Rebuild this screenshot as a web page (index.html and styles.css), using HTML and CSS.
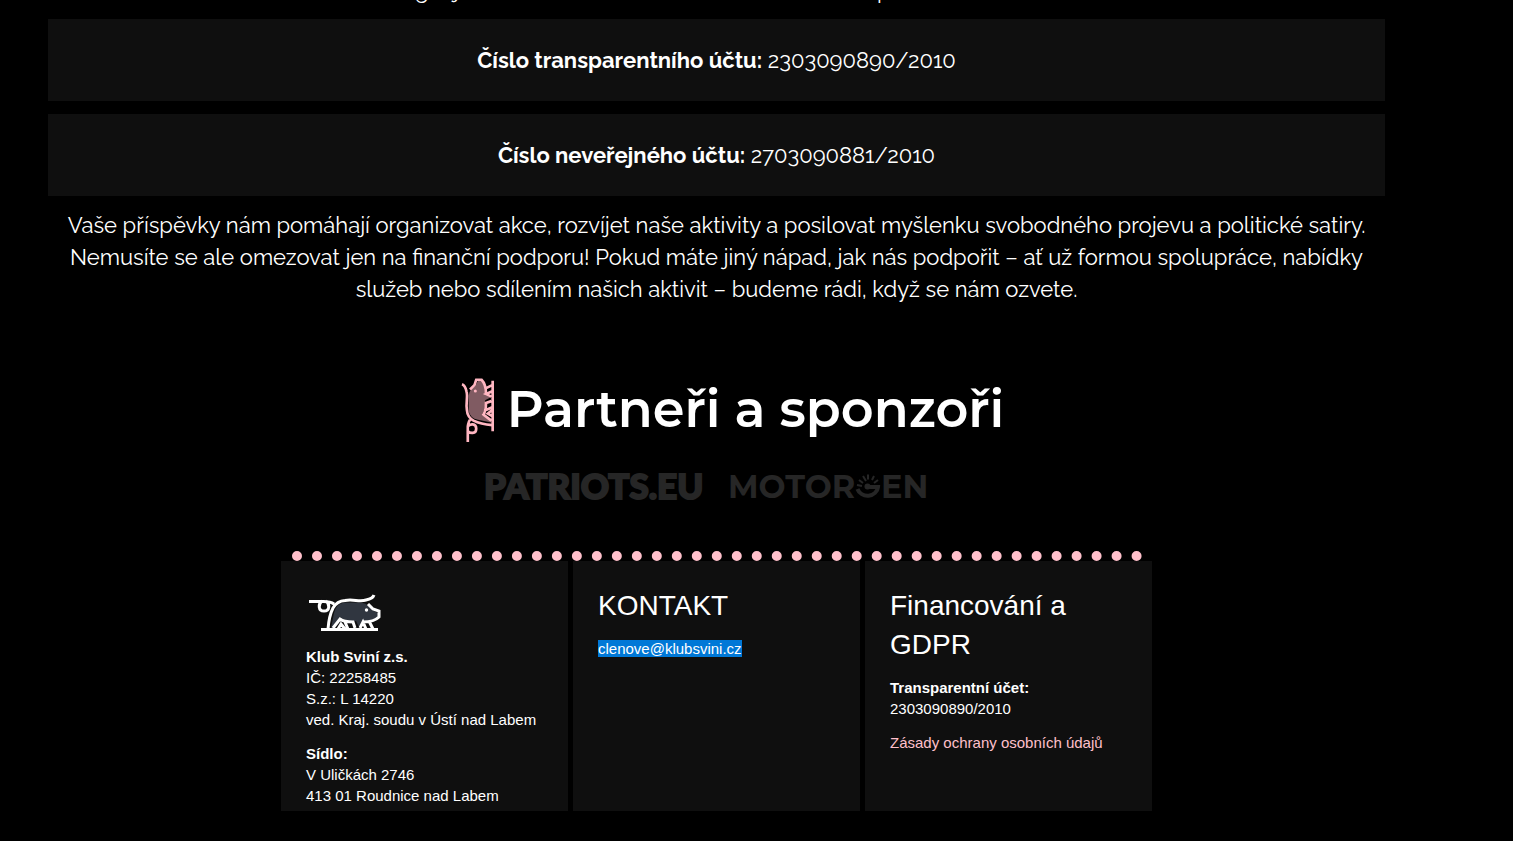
FILE: index.html
```
<!DOCTYPE html>
<html lang="cs">
  <head>
    <meta charset="utf-8">
    <meta name="viewport" content="width=device-width, initial-scale=1.0">
    <title>Klub Sviní</title>
    <link rel="stylesheet" href="styles.css">
  </head>
  <body>
    <svg class="sprite" aria-hidden="true">
      <symbol id="prase" viewBox="0 0 72 38">
        <path class="telo" d="M22 34 25 19Q27 10 35 8.500H52Q57 9 60 12L63 16 69 19V23Q65 27 53 27L50 33 47 27Q37 28 31 23L24 34Z"/>
        <path class="obrys" d="M0 7.500H12Q21 7 25 10M13 7C9 10 9 17 15 17 21 17 21 10 17 7M19 35Q20 22 24 14 28 7 36 6.500C44 5 51 8 57 6 62 5 64 4 65 1"/>
        <path class="obrys" d="M59 10 64 15 70 17V23Q65 28 54 28M24 34 31 25Q35 28 44 28L46 34M29 35 32 30 36 35M36 28 39 35M51 34 54 28 57 35M60 27 64 35M12 35.500H69"/>
        <circle class="oko" cx="57.500" cy="16" r="1.700"/>
      </symbol>
    </svg>

    <main>
      <div class="podpora">
        <p class="uvod">Agitujeme za svobodu slova a satiru, ale každá pomoc se hodí.</p>
        <div class="ucet"><strong>Číslo transparentního účtu:</strong> 2303090890/2010</div>
        <div class="ucet"><strong>Číslo neveřejného účtu:</strong> 2703090881/2010</div>
        <p>Vaše příspěvky nám pomáhají organizovat akce, rozvíjet naše aktivity a posilovat myšlenku svobodného projevu a politické satiry. Nemusíte se ale omezovat jen na finanční podporu! Pokud máte jiný nápad, jak nás podpořit – ať už formou spolupráce, nabídky služeb nebo sdílením našich aktivit – budeme rádi, když se nám ozvete.</p>
      </div>

      <section class="partneri">
        <h2>
          <svg class="ikona" viewBox="0 0 34 66" aria-hidden="true"><use href="#prase" width="64" height="34" transform="translate(0 66) rotate(-90)"/></svg>
          Partneři a sponzoři
        </h2>
        <div class="loga">
          <svg width="222" height="32" viewBox="0 0 222 32" role="img" aria-label="PATRIOTS.EU">
            <text class="patriots" x="0" y="28">PATRIOTS.EU</text>
          </svg>
          <svg width="200" height="32" viewBox="0 0 200 32" role="img" aria-label="MOTORGEN">
            <text class="motorgen" x="-2" y="27">MOTOR</text>
            <path class="budik" d="M127.500 18A10.500 9.500 0 0 0 148 16H138"/>
            <circle class="stred" cx="137.500" cy="15.500" r="3"/>
            <path class="rysky" d="M127 14l5 1M129 9l4 3M133 5l3 5M138 3.500v5M144 5l-2 4M148 9l-4 3"/>
            <text class="motorgen" x="151" y="27">EN</text>
          </svg>
        </div>
      </section>
    </main>

    <footer>
      <div class="tecky"></div>
      <div class="sloupce">
        <div class="sloupec">
          <svg class="logo" viewBox="0 0 72 38" role="img" aria-label="Klub Sviní"><use href="#prase"/></svg>
          <p><strong>Klub Sviní z.s.</strong><br>IČ: 22258485<br>S.z.: L 14220<br>ved. Kraj. soudu v Ústí nad Labem</p>
          <p><strong>Sídlo:</strong><br>V Uličkách 2746<br>413 01 Roudnice nad Labem</p>
        </div>
        <div class="sloupec">
          <h3>KONTAKT</h3>
          <p><a class="mail" href="mailto:clenove@klubsvini.cz">clenove@klubsvini.cz</a></p>
        </div>
        <div class="sloupec">
          <h3>Financování a GDPR</h3>
          <p><strong>Transparentní účet:</strong><br>2303090890/2010</p>
          <p><a href="#">Zásady ochrany osobních údajů</a></p>
        </div>
      </div>
    </footer>
  </body>
</html>
```
FILE: styles.css
```
* {
  box-sizing: border-box;
}
body {
  margin: 0;
  padding: 0 128px 30px 48px;
  color: #ffffff;
  background-color: #000000;
  font-family: "Liberation Sans", Arial, sans-serif;
  font-size: 15px;
  line-height: 21px;
}
.sprite {
  display: none;
}

.podpora {
  font-family: Raleway, Lato, sans-serif;
  font-size: 22px;
  line-height: 32px;
  text-align: center;
}
.podpora p {
  margin: 0;
}
.podpora .uvod {
  margin: -26px 0 13px;
}
.ucet {
  margin-bottom: 13px;
  padding: 25px;
  background-color: #0f0f0f;
}

.partneri {
  margin-top: 64px;
}
.partneri h2 {
  display: flex;
  justify-content: center;
  align-items: center;
  gap: 12px;
  margin: 0;
  padding-left: 32px;
  font-family: Montserrat, Inter, sans-serif;
  font-size: 51px;
  font-weight: 600;
  line-height: 80px;
}
.ikona {
  width: 34px;
  height: 66px;
}
.telo {
  fill: var(--telo);
}
.obrys {
  fill: none;
  stroke: var(--obrys);
  stroke-width: 3;
}
.oko {
  fill: var(--obrys);
}
.ikona {
  --telo: #805b62;
  --obrys: #ffb6c1;
}
.logo {
  --telo: #303640;
  --obrys: #ffffff;
}
.loga {
  display: flex;
  justify-content: center;
  gap: 24px;
  margin-top: 22px;
  padding-right: 20px;
}
.loga svg {
  overflow: visible;
}
.patriots {
  fill: #262626;
  stroke: #262626;
  stroke-width: 2;
  font-family: Lato, sans-serif;
  font-size: 35px;
  font-weight: 900;
}
.motorgen {
  fill: #262626;
  font-family: Montserrat, Inter, sans-serif;
  font-size: 32px;
  font-weight: 700;
}
.budik,
.rysky {
  fill: none;
  stroke: #262626;
  stroke-width: 4;
}
.rysky {
  stroke-width: 2;
}
.stred {
  fill: #262626;
}

footer {
  max-width: 871px;
  margin: 48px auto 0;
}
.tecky {
  margin: 0 10px 0 11px;
  border-top: 10px dotted #ffc0cb;
}
.sloupce {
  display: grid;
  grid-template-columns: repeat(3, 1fr);
  gap: 5px;
}
.sloupec {
  min-height: 250px;
  padding: 25px 25px 0;
  background-color: #0f0f0f;
}
.sloupec h3 {
  margin: 0 0 13px;
  font-size: 28px;
  font-weight: 400;
  line-height: 39px;
}
.sloupec p {
  margin: 0 0 13px;
}
.sloupec p:last-child {
  margin-bottom: 0;
}
.sloupec a {
  color: #ffc0cb;
  text-decoration: none;
}
.sloupec a.mail {
  color: #ffffff;
  background-color: #0078d7;
}
.logo {
  display: block;
  width: 72px;
  height: 38px;
  margin: 8px 3px 14px;
}
```
